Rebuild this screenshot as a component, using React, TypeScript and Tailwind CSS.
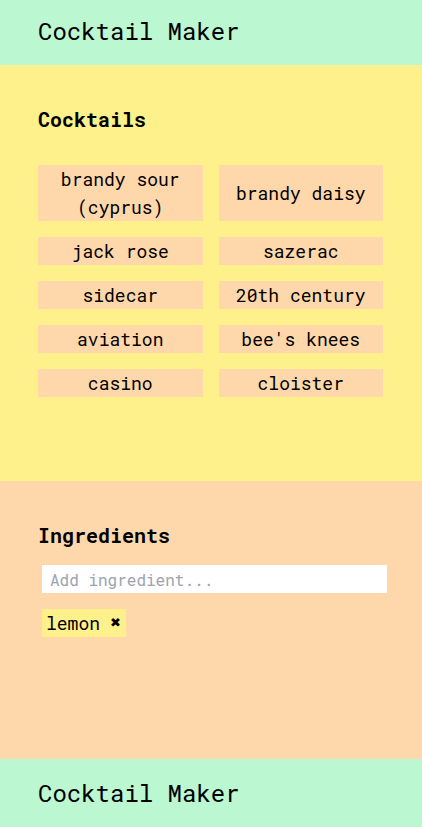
import React from "react";

const cocktails = [
  "brandy sour (cyprus)",
  "brandy daisy",
  "jack rose",
  "sazerac",
  "sidecar",
  "20th century",
  "aviation",
  "bee's knees",
  "casino",
  "cloister",
];

const mono = { fontFamily: '"Roboto Mono", "DejaVu Sans Mono", "Liberation Mono", monospace' };

export default function App() {
  return (
    <div className="w-[422px] min-h-[827px] flex flex-col text-black" style={mono}>
      <header className="h-[65px] bg-[#bbf7d0] flex items-center px-[38px] pb-1">
        <h1 className="text-[24px] leading-8 font-normal">Cocktail Maker</h1>
      </header>
      <section className="h-[416px] bg-[#fef08a] px-[38px] pt-[40px]">
        <h2 className="text-[20px] leading-7 font-bold mb-[32px]">Cocktails</h2>
        <div className="w-[345px] grid grid-cols-2 gap-x-4 gap-y-4 items-start">
          {cocktails.map((c) => (
            <div
              key={c}
              className={`bg-[#fed7aa] text-center text-[18px] leading-7 flex items-center justify-center ${
                c === "brandy daisy" ? "h-[56px]" : "min-h-[28px]"
              }`}
            >
              {c}
            </div>
          ))}
        </div>
      </section>
      <section className="h-[278px] bg-[#fed7aa] px-[38px] pt-[40px]">
        <h2 className="text-[20px] leading-7 font-bold mb-[16px]">Ingredients</h2>
        <div className="pl-1">
          <input
            className="w-[345px] h-[28px] bg-white px-2 text-[16px] outline-none placeholder:text-[#9ca3af]"
            style={mono}
            placeholder="Add ingredient..."
          />
          <div className="mt-4 flex">
            <span className="bg-[#fef08a] h-[28px] flex items-center pl-[4px] pr-[5px] text-[18px] leading-7 gap-[10px]">
              <span>lemon</span>
              <span className="text-[13px] font-bold" style={{ fontFamily: '"DejaVu Sans", sans-serif' }}>✖</span>
            </span>
          </div>
        </div>
      </section>
      <footer className="h-[68px] bg-[#bbf7d0] flex items-center px-[38px]">
        <h1 className="text-[24px] leading-8 font-normal">Cocktail Maker</h1>
      </footer>
    </div>
  );
}
